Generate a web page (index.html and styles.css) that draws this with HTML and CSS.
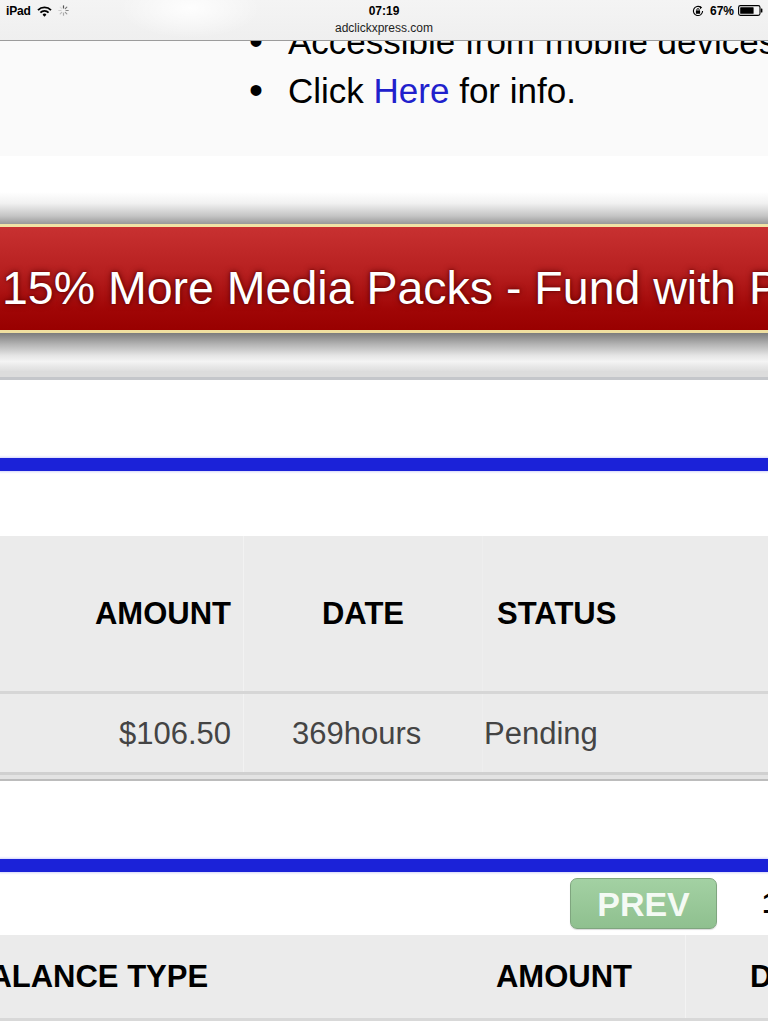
FILE: index.html
```html
<!DOCTYPE html>
<html lang="en">
<head>
<meta charset="utf-8">
<title>adclickxpress.com</title>
<link rel="stylesheet" href="styles.css">
</head>
<body>
<header class="statusbar">
  <div class="sb-top">
    <div class="sb-left">
      <span class="sb-device">iPad</span>
      <svg class="sb-wifi" width="15" height="11" viewBox="0 0 15 11">
        <path d="M1 4.2 A9 9 0 0 1 14 4.2" stroke="#000" stroke-width="1.8" fill="none"/>
        <path d="M3.4 6.6 A5.6 5.6 0 0 1 11.6 6.6" stroke="#000" stroke-width="1.8" fill="none"/>
        <path d="M5.6 8.7 A2.2 2.2 0 0 1 9.4 8.7 L7.5 10.8 Z" fill="#000"/>
      </svg>
      <svg class="sb-spin" width="11" height="11" viewBox="0 0 11 11">
        <g stroke-width="1.2" stroke-linecap="round">
          <line x1="5.5" y1="0.8" x2="5.5" y2="3" stroke="#555"/>
          <line x1="8.8" y1="2.2" x2="7.3" y2="3.7" stroke="#777"/>
          <line x1="10.2" y1="5.5" x2="8" y2="5.5" stroke="#888"/>
          <line x1="8.8" y1="8.8" x2="7.3" y2="7.3" stroke="#999"/>
          <line x1="5.5" y1="10.2" x2="5.5" y2="8" stroke="#aaa"/>
          <line x1="2.2" y1="8.8" x2="3.7" y2="7.3" stroke="#bbb"/>
          <line x1="0.8" y1="5.5" x2="3" y2="5.5" stroke="#ccc"/>
          <line x1="2.2" y1="2.2" x2="3.7" y2="3.7" stroke="#ddd"/>
        </g>
      </svg>
    </div>
    <div class="sb-time">07:19</div>
    <div class="sb-right">
      <svg class="sb-lock" width="12" height="12" viewBox="0 0 12 12">
        <path d="M10.6 6 A4.6 4.6 0 1 1 8.8 2.3" stroke="#000" stroke-width="1.1" fill="none"/>
        <path d="M7.6 0.9 L10.2 2.2 L8.2 4.2 Z" fill="#000"/>
        <rect x="3.9" y="5.6" width="4.2" height="3.2" rx="0.4" fill="#000"/>
        <path d="M4.8 5.8 V4.8 A1.2 1.2 0 0 1 7.2 4.8 V5.8" stroke="#000" stroke-width="0.9" fill="none"/>
      </svg>
      <span class="sb-pct">67%</span>
      <svg class="sb-batt" width="25" height="11" viewBox="0 0 25 11">
        <rect x="0.6" y="0.6" width="21.4" height="9.8" rx="1.8" stroke="#000" stroke-width="1.1" fill="none"/>
        <rect x="2.2" y="2.2" width="13.4" height="6.6" rx="0.6" fill="#000"/>
        <rect x="22.8" y="3.5" width="1.6" height="4" rx="0.6" fill="#000"/>
      </svg>
    </div>
  </div>
  <div class="sb-url">adclickxpress.com</div>
</header>

<main class="page">
  <section class="info">
    <ul class="info-list">
      <li>Accessible from mobile devices.</li>
      <li>Click <a class="info-link" href="#">Here</a> for info.</li>
    </ul>
  </section>

  <section class="promo">
    <div class="shade-top"></div>
    <div class="banner"><span class="banner-text">15% More Media Packs - Fund with Payza</span></div>
    <div class="shade-bottom"></div>
    <div class="rule-band"></div>
    <div class="rule-line"></div>
  </section>

  <div class="gap gap-a"></div>
  <div class="bluebar"></div>
  <div class="gap gap-b"></div>

  <section class="table1">
    <div class="t1-head">
      <div class="c1 cell-amount">AMOUNT</div>
      <div class="c2 cell-date">DATE</div>
      <div class="c3 cell-status">STATUS</div>
    </div>
    <div class="t1-row">
      <div class="c1 cell-amount">$106.50</div>
      <div class="c2 cell-date-val">369hours</div>
      <div class="c3 cell-status-val">Pending</div>
    </div>
    <div class="t1-band"></div>
    <div class="t1-line"></div>
  </section>

  <div class="gap gap-c"></div>
  <div class="bluebar"></div>

  <nav class="pager">
    <button class="btn-prev" type="button">PREV</button>
    <span class="page-num">1</span>
  </nav>

  <section class="table2">
    <div class="t2-head">
      <div class="t2c1"><span class="t2-type">BALANCE TYPE</span></div>
      <div class="t2c2">AMOUNT</div>
      <div class="t2c3">DATE</div>
    </div>
  </section>
</main>
</body>
</html>
```

FILE: styles.css
```css
html, body {
  margin: 0;
  padding: 0;
}

body {
  width: 768px;
  height: 1024px;
  overflow: hidden;
  background: #ffffff;
  font-family: "Liberation Sans", Arial, Helvetica, sans-serif;
  color: #000;
}

/* ---------- iOS status / address bar ---------- */
.statusbar {
  position: fixed;
  top: 0;
  left: 0;
  width: 768px;
  height: 41px;
  box-sizing: border-box;
  border-bottom: 1px solid #9c9c9c;
  background:
    radial-gradient(ellipse 70px 30px at 190px 8px, rgba(255,255,255,0.9), rgba(255,255,255,0) 100%),
    linear-gradient(#f4f4f4, #efefef);
  z-index: 10;
}

.sb-top {
  display: grid;
  grid-template-columns: 1fr auto 1fr;
  align-items: center;
  height: 21px;
  font-size: 12px;
}

.sb-left {
  display: flex;
  align-items: center;
  gap: 6px;
  padding-left: 6px;
}

.sb-device {
  font-weight: bold;
  letter-spacing: -0.2px;
}

.sb-wifi {
  margin-top: 1px;
}

.sb-time {
  font-weight: bold;
  text-align: center;
}

.sb-right {
  display: flex;
  align-items: center;
  justify-content: flex-end;
  gap: 4px;
  padding-right: 5px;
}

.sb-lock {
  margin-right: 2px;
}

.sb-pct {
  font-weight: bold;
}

.sb-url {
  text-align: center;
  font-size: 12px;
  line-height: 14px;
  color: #1e1e1e;
}

/* ---------- page ---------- */
.page {
  width: 768px;
  overflow: hidden;
}

.info {
  background: #fafafa;
  padding: 17px 0 41px;
}

.info-list {
  margin: 0;
  padding: 0 0 0 288px;
  font-size: 35px;
  line-height: 49px;
  white-space: nowrap;
  list-style: none;
}

.info-list li::before {
  content: "\2022";
  display: inline-block;
  width: 39px;
  margin-left: -39px;
  font-size: 40px;
  line-height: 49px;
  vertical-align: top;
}

.info-link {
  color: #2020cc;
  text-decoration: none;
}

/* ---------- promo banner ---------- */
.promo {
  padding-top: 36px;
}

.shade-top {
  height: 32px;
  background: linear-gradient(#ffffff, #f1f1f1 35%, #c4c4c4 75%, #999999);
}

.banner {
  height: 103px;
  border-top: 3px solid #f1e3a6;
  border-bottom: 3px solid #efdfa0;
  background: linear-gradient(#c83131, #b61f1f 45%, #a00606 80%, #990000);
  overflow: hidden;
  white-space: nowrap;
}

.banner-text {
  display: block;
  padding: 38px 0 0 2px;
  font-size: 46.5px;
  line-height: 46px;
  color: #ffffff;
  text-shadow: 0 0 6px #5c0000, 0 0 2px #6a0000;
}

.shade-bottom {
  height: 38px;
  background: linear-gradient(#7c7c7c, #b4b4b4 30%, #e6e6e6 60%, #f4f4f4 75%, #e6e6e6 90%, #dedede);
}

.rule-band {
  height: 6px;
  background: #dcdcdc;
}

.rule-line {
  height: 3px;
  background: #c4c6ca;
}

.gap-a { height: 78px; }
.gap-b { height: 65px; }
.gap-c { height: 78px; }

.bluebar {
  height: 13px;
  background: #1b22d8;
  box-shadow: 0 0 2px 1px rgba(70, 80, 235, 0.25);
}

/* ---------- first table ---------- */
.t1-head,
.t1-row {
  display: grid;
  grid-template-columns: 244px 239px 1fr;
  background: #ebebeb;
  font-size: 31px;
}

.t1-head {
  height: 155px;
  border-bottom: 3px solid #d6d6d6;
  font-weight: bold;
}

.t1-row {
  height: 78px;
  border-bottom: 3px solid #d0d0d0;
  color: #444444;
}

.c1, .c2, .c3 {
  display: flex;
  align-items: center;
  white-space: nowrap;
}

.c1 {
  justify-content: flex-end;
  padding-right: 12px;
  border-right: 1px solid #f2f2f2;
}

.c2 {
  border-right: 1px solid #eeeeee;
}

.cell-date {
  justify-content: center;
}

.cell-status {
  padding-left: 14px;
}

.cell-date-val {
  padding-left: 48px;
  padding-top: 2px;
}

.cell-status-val {
  padding-left: 1px;
  padding-top: 2px;
}

.t1-row .cell-amount {
  padding-top: 2px;
}

.t1-band {
  height: 4px;
  background: #e3e3e3;
}

.t1-line {
  height: 2px;
  background: #bcbcbc;
}

/* ---------- pager ---------- */
.pager {
  display: flex;
  align-items: flex-start;
  height: 63px;
  box-sizing: border-box;
  padding: 6px 0 0 570px;
  white-space: nowrap;
  overflow: hidden;
}

.btn-prev {
  flex-shrink: 0;
  width: 147px;
  height: 51px;
  box-sizing: border-box;
  border: 1px solid #7fa57f;
  border-radius: 7px;
  background: linear-gradient(#a3d1a3, #8fc08f);
  color: #f4faf4;
  font-family: "Liberation Sans", Arial, sans-serif;
  font-size: 34px;
  font-weight: bold;
  line-height: 1;
  padding: 0;
  box-shadow: 0 1px 1px rgba(0,0,0,0.15);
}

.page-num {
  flex-shrink: 0;
  margin-left: 45px;
  margin-top: 10px;
  font-size: 30px;
  font-weight: bold;
  line-height: 30px;
}

/* ---------- second table ---------- */
.t2-head {
  display: grid;
  grid-template-columns: 440px 246px 1fr;
  height: 83px;
  border-bottom: 3px solid #d8d8d8;
  background: #ebebeb;
  font-size: 31px;
  font-weight: bold;
  white-space: nowrap;
}

.t2c1, .t2c2, .t2c3 {
  display: flex;
  align-items: center;
  overflow: visible;
}

.t2-type {
  margin-left: -33px;
}

.t2c2 {
  justify-content: flex-end;
  padding-right: 53px;
  border-right: 1px solid #f3f3f3;
}

.t2c3 {
  padding-left: 64px;
}
```
